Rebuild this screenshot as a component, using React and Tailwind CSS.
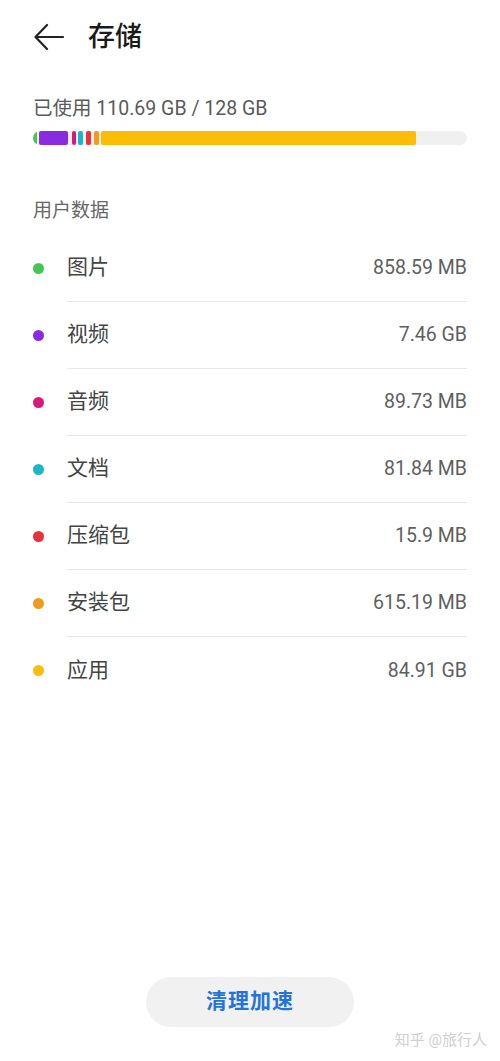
import React from 'react';

const font = { fontFamily: 'Roboto, "Noto Sans CJK SC", sans-serif' };

const items = [
  { name: '图片', size: '858.59 MB', dot: 'bg-[#45c650]' },
  { name: '视频', size: '7.46 GB', dot: 'bg-[#8a2be2]' },
  { name: '音频', size: '89.73 MB', dot: 'bg-[#d8197a]' },
  { name: '文档', size: '81.84 MB', dot: 'bg-[#1db6c6]' },
  { name: '压缩包', size: '15.9 MB', dot: 'bg-[#e8323a]' },
  { name: '安装包', size: '615.19 MB', dot: 'bg-[#f29a1c]' },
  { name: '应用', size: '84.91 GB', dot: 'bg-[#fbbd08]' },
];

function UsageBar() {
  return (
    <div className="mt-[10px] h-[14px] w-full rounded-full bg-[#f0f0f0] flex overflow-hidden">
      <div className="w-[4px] h-full rounded-l-full rounded-r-[2px] bg-[#45c650]" />
      <div className="ml-[2px] w-[29px] h-full rounded-[2px] bg-[#8a2be2]" />
      <div className="ml-[4px] w-[4px] h-full rounded-[2px] bg-[#d8197a]" />
      <div className="ml-[2px] w-[5px] h-full rounded-[2px] bg-[#1db6c6]" />
      <div className="ml-[3px] w-[5px] h-full rounded-[2px] bg-[#e8323a]" />
      <div className="ml-[3px] w-[5px] h-full rounded-[2px] bg-[#f29a1c]" />
      <div className="ml-[2px] w-[315px] h-full rounded-[2px] bg-[#fbbd08]" />
    </div>
  );
}

export default function App() {
  return (
    <div className="relative min-h-[1061px] w-[500px] bg-white flex flex-col" style={font}>
      {/* Header */}
      <div className="h-[74px] flex items-center pl-[34px]">
        <svg width="30" height="28" viewBox="0 0 30 28" fill="none" stroke="#222" strokeWidth="2.2" strokeLinecap="round" strokeLinejoin="round">
          <path d="M29 14H2" />
          <path d="M13 2L1.5 14L13 26" />
        </svg>
        <h1 className="ml-[24px] text-[27px] leading-none font-medium text-[#1a1a1a]">存储</h1>
      </div>

      <div className="px-[33px] flex flex-col">
        <div className="mt-[23px] text-[19.5px] leading-[24px] text-[#5a5a5a]">已使用 110.69 GB / 128 GB</div>
        <UsageBar />

        <div className="mt-[54px] text-[19px] leading-[24px] text-[#666]">用户数据</div>

        <div className="mt-[12px] flex flex-col">
          {items.map((it, i) => (
            <div key={it.name} className="flex items-stretch">
              <div className="w-[34px] flex items-center">
                <div className={`w-[11px] h-[11px] rounded-full ${it.dot}`} />
              </div>
              <div
                className={`flex-1 h-[67px] flex items-center justify-between ${
                  i < items.length - 1 ? 'border-b border-[#e8e8e8]' : ''
                }`}
              >
                <span className="text-[21px] text-[#444]">{it.name}</span>
                <span className="text-[19.5px] text-[#5f5f5f]">{it.size}</span>
              </div>
            </div>
          ))}
        </div>
      </div>

      <div className="mt-auto mb-[34px] flex justify-center">
        <button className="w-[208px] h-[50px] rounded-full bg-[#f1f1f1] text-[21px] font-semibold text-[#2373da] tracking-[1px]">
          清理加速
        </button>
      </div>

      <div className="absolute right-[13px] bottom-[10px] text-[15px] text-[#cfcfcf]">知乎 @旅行人</div>
    </div>
  );
}
